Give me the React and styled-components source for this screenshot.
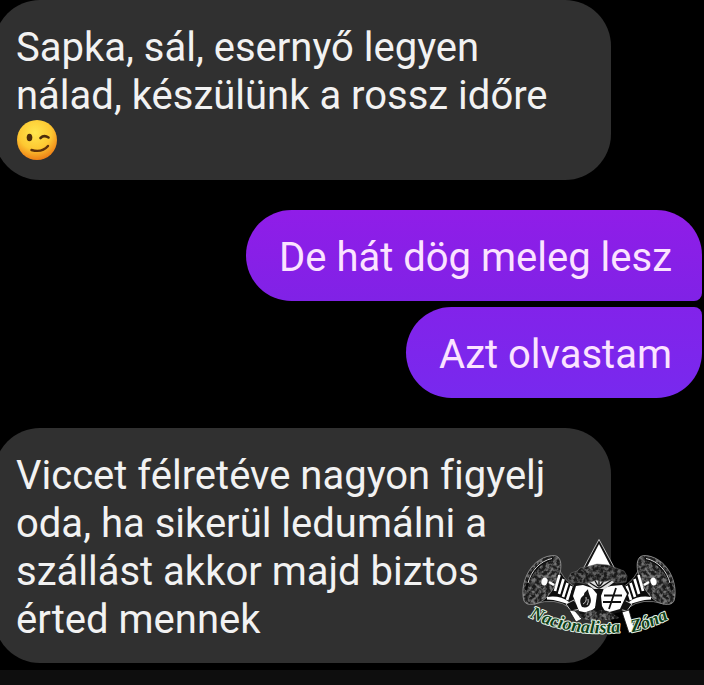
import React from "react";
import styled, { createGlobalStyle } from 'styled-components';


const App = () => {
    return (
        <>
            <GlobalStyle />
            <Page>
                <Thread>
                    <Received>
                        Sapka, sál, esernyő legyen nálad, készülünk a rossz időre
                        <Wink />
                    </Received>
                    <SentGroup>
                        <Sent $first>De hát dög meleg lesz</Sent>
                        <Sent>Azt olvastam</Sent>
                    </SentGroup>
                    <Received>
                        Viccet félretéve nagyon figyelj oda, ha sikerül ledumálni a szállást akkor majd biztos érted mennek
                    </Received>
                    <Logo />
                </Thread>
                <BottomBar />
            </Page>
        </>
    )
}

const Wink = () => (
    <Emoji viewBox="0 0 41 41" role="img" aria-label="😉">
        <defs>
            <radialGradient id="face" cx="45%" cy="32%" r="68%">
                <stop offset="0" stopColor="#ffe64e" />
                <stop offset="0.6" stopColor="#fdc832" />
                <stop offset="1" stopColor="#ee7f16" />
            </radialGradient>
        </defs>
        <circle cx="21" cy="20" r="20" fill="url(#face)" />
        <ellipse cx="13.5" cy="17.5" rx="2.8" ry="3.8" fill="#4d2c0b" />
        <path d="M24.500 18 Q28 14.500 32.500 17.500" fill="none" stroke="#4d2c0b" strokeWidth="2.6" strokeLinecap="round" />
        <path d="M15.500 30 Q26 33 32 26" fill="none" stroke="#5d310b" strokeWidth="2.4" strokeLinecap="round" />
    </Emoji>
)

const bell = "M553 555.500 C561 555 562 564 560 573 C557 584 552 591 547 597 C539 605 527 607 524 601 C521 591 524 577 531 568 C537 560 545 556 553 555.500Z"
const crown = "M568 579 L571 573 L577 571 L580 568 L590 566 L597 564 L608 565 L616 568 L624 571 L627 576 L626 582 L616 583 L611 580 L603 582 L596 580 L586 584 L576 582 L571 583Z"

const Horn = () => (
    <>
        <path d="M560 571 Q567 584 578 588 L582 606 L570 608 Q556 597 534 604Z" fill="#0b0b0b" stroke="#999" strokeWidth="0.7" />
        <path d={bell} fill="#1c1c1c" />
        <path d={bell} filter="url(#grain)" />
        <path d={bell} fill="none" stroke="#a8a8a8" strokeWidth="0.7" />
        <path d="M526 590 C529 573 540 561 553 559" fill="none" stroke="#0c0c0c" strokeWidth="2.4" />
        <path d="M528 583 C531 571 540 561 552 558.500" fill="none" stroke="#eee" strokeWidth="0.9" />
        <ellipse cx="544.500" cy="581.500" rx="3" ry="4" fill="#fff" transform="rotate(18 544.5 581.5)" />
        <path d="M549 582 L554 585" stroke="#fff" strokeWidth="2.6" />
        <path d="M559.500 575 L555 591 M563.500 579 L559 594 M567.500 583 L563 597 M571.500 586 L567 600" stroke="#fff" strokeWidth="2.7" />
        <path d="M547 597 Q560 595 569 602 L571 606 Q560 600 547 599.500Z" fill="#fff" />
        <path d="M566 604 L574 600 L580 609 L571 611Z" fill="#111" stroke="#eee" strokeWidth="0.8" />
    </>
)

const Logo = () => (
    <Watermark viewBox="520 536 160 104" role="img" aria-label="Nacionalista Zóna">
        <defs>
            <filter id="grain" x="0" y="0" width="1" height="1" colorInterpolationFilters="sRGB">
                <feTurbulence type="fractalNoise" baseFrequency="0.28" numOctaves="3" seed="4" />
                <feColorMatrix values="0 0 0 0 0.46  0 0 0 0 0.46  0 0 0 0 0.46  3 0 0 0 -1.1" />
                <feComposite in2="SourceGraphic" operator="in" />
            </filter>
            <path id="arcLeft" d="M529 617 Q572 638 624 632" />
            <path id="arcRight" d="M632 632 Q650 629 672 617" />
        </defs>
        <path d="M599 539.500 L583 569 L615 569Z" fill="#111" stroke="#ddd" strokeWidth="0.8" />
        <path d="M599 544 L586 569 L612 569Z" fill="#fff" />
        <Horn />
        <g transform="translate(1198 0) scale(-1 1)">
            <Horn />
        </g>
        <path d="M569 610 L575 611 L582 619 L576 622Z M622 612 L629 610 L635 631 L629 633Z" fill="#fff" stroke="#111" strokeWidth="0.8" />
        <path d="M571 592 L576 581 H622 L629 593 L621 612 L598 617 L580 614Z" fill="#111" />
        <path d="M573 596 L576 586 L583 585 L592 588 L597 594 L595 608 L588 613 L579 611Z" fill="#fff" />
        <path d="M601 596 L604 588 L611 586 L622 585 L627 594 L620 609 L606 613 L602 606Z" fill="#fff" />
        <path d="M582 607 C579 601 580 598 584 595 C584 592 587 591 588 589 C588 594 593 599 590 604 C589 607 586 608 582 607Z" fill="#151515" />
        <path d="M583 604 Q587 602 586 597 M587 605 Q589 602 588 599" fill="none" stroke="#eee" strokeWidth="0.8" />
        <path d="M604 595.500 H622 M603 602 H621 M616 588 L609 609" stroke="#111" strokeWidth="1.8" />
        <path d="M597 584 Q600 601 594 610 L587 617 H612 L602 609 Q599 600 602 584Z" fill="#101010" />
        <path d="M579 617 Q589 608 597 611 Q608 608 619 618 L610 620 H587Z" fill="#191919" />
        <path d="M579 617 Q589 608 597 611 Q608 608 619 618 L610 620 H587Z" filter="url(#grain)" />
        <path d="M582 580 H617 L605 589 H594Z" fill="#ddd" />
        <path d="M599 590 V580 M598 588 L587 581 M600 588 L612 580 M598 586 L594 579 M600 586 L605 579" stroke="#111" strokeWidth="1.3" />
        <path d={crown} fill="#1a1a1a" stroke="#777" strokeWidth="0.5" />
        <path d={crown} filter="url(#grain)" opacity="0.8" />
        <LogoText><textPath href="#arcLeft">Nacionalista</textPath></LogoText>
        <LogoText><textPath href="#arcRight">Zóna</textPath></LogoText>
    </Watermark>
)


const GlobalStyle = createGlobalStyle`
    * {
        box-sizing: border-box;
    }

    body {
        margin: 0;
        background: #000;
    }
`

const Page = styled.div`
    display: flex;
    flex-direction: column;
    min-height: 100vh;
    overflow: hidden;
    font-family: Roboto, sans-serif;
    font-size: 40px;
    line-height: 48px;
    font-variant-ligatures: none;
`

const Thread = styled.main`
    position: relative;
    display: flex;
    flex-direction: column;
    gap: 30px;
    padding-bottom: 7px;
`

const Bubble = styled.div`
    padding: 24px 30px 19px 33px;
    border-radius: 46px;
`

/* runs a little past the left edge of the screen */
const Received = styled(Bubble)`
    margin: 0 93px 0 -6px;
    padding-left: 22px;
    background: #303030;
    color: #f2f2f2;
`

const SentGroup = styled.div`
    display: flex;
    flex-direction: column;
    align-items: flex-end;
    gap: 6px;
    padding-right: 2px;
`

const Sent = styled(Bubble)`
    background: ${({ $first }) => $first
        ? 'linear-gradient(#901de8, #8022e6)'
        : 'linear-gradient(#8223ea, #7829ee)'};
    border-radius: ${({ $first }) => $first ? '46px 46px 8px 46px' : '46px 8px 46px 46px'};
    color: #fbe3ff;
`

const Emoji = styled.svg`
    display: block;
    width: 41px;
    height: 41px;
`

const Watermark = styled.svg`
    position: absolute;
    right: 24px;
    bottom: 30px;
    width: 160px;
    height: 104px;
`

const LogoText = styled.text`
    font-family: "Liberation Serif", serif;
    font-size: 18px;
    font-style: italic;
    font-weight: 700;
    fill: #0e4219;
    stroke: #e2f0e2;
    stroke-width: 2px;
    stroke-linejoin: round;
    paint-order: stroke;
`

const BottomBar = styled.footer`
    flex: 1;
    min-height: 15px;
    background: #0e0e0e;
`


export default App;
